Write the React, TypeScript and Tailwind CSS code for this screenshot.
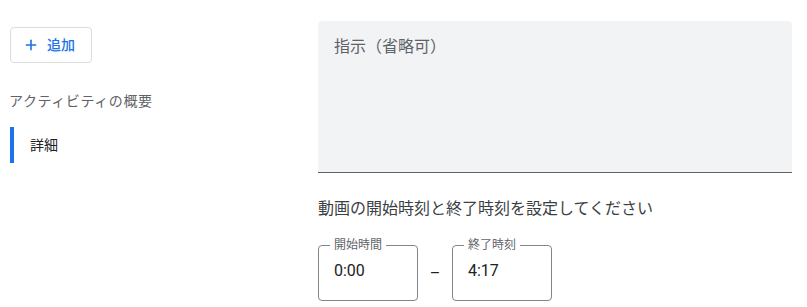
import { Plus } from "lucide-react";

const font = { fontFamily: '"Roboto", "Noto Sans CJK JP", sans-serif' };

function TimeField({ label, value }: { label: string; value: string }) {
  return (
    <fieldset className="w-[100px] h-[64px] rounded-[4px] border border-[#80868b]">
      <legend className="ml-[11px] px-[4px] text-[12px] leading-[16px] text-[#5f6368]">{label}</legend>
      <div className="pl-[15px] pt-[6px] text-[16px] leading-[24px] text-[#202124]">{value}</div>
    </fieldset>
  );
}

export default function App() {
  return (
    <div className="flex pt-[21px] bg-white min-h-[307px] w-[807px] overflow-hidden" style={font}>
      {/* Sidebar */}
      <aside className="w-[318px] shrink-0 pl-[10px] pt-[6px]">
        <button className="flex items-center gap-[8px] h-[36px] w-[82px] rounded-[4px] border border-[#dadce0] pl-[12px] text-[14px] font-medium text-[#1a73e8]">
          <Plus className="w-[16px] h-[16px]" strokeWidth={2.4} />
          追加
        </button>

        <div className="mt-[28px] -ml-[1px] text-[14px] leading-[20px] tracking-[0.6px] text-[#5f6368]">アクティビティの概要</div>

        <div className="mt-[16px] flex h-[36px] items-center border-l-4 border-[#1a73e8] pl-[16px] text-[14px] text-[#202124]">
          詳細
        </div>
      </aside>

      {/* Main */}
      <main className="w-[474px]">
        <div className="h-[152px] rounded-t-[4px] border-b border-[#5f6368] bg-[#f1f3f4] px-[16px] pt-[14px] text-[16px] leading-[24px] text-[#5f6368]">
          指示（省略可）
        </div>

        <h2 className="mt-[24px] text-[16px] leading-[24px] text-[#3c4043]">
          動画の開始時刻と終了時刻を設定してください
        </h2>

        <div className="mt-[16px] flex items-center">
          <TimeField label="開始時間" value="0:00" />
          <span className="w-[34px] pt-[10px] text-center text-[16px] text-[#202124]">–</span>
          <TimeField label="終了時刻" value="4:17" />
        </div>
      </main>
    </div>
  );
}
